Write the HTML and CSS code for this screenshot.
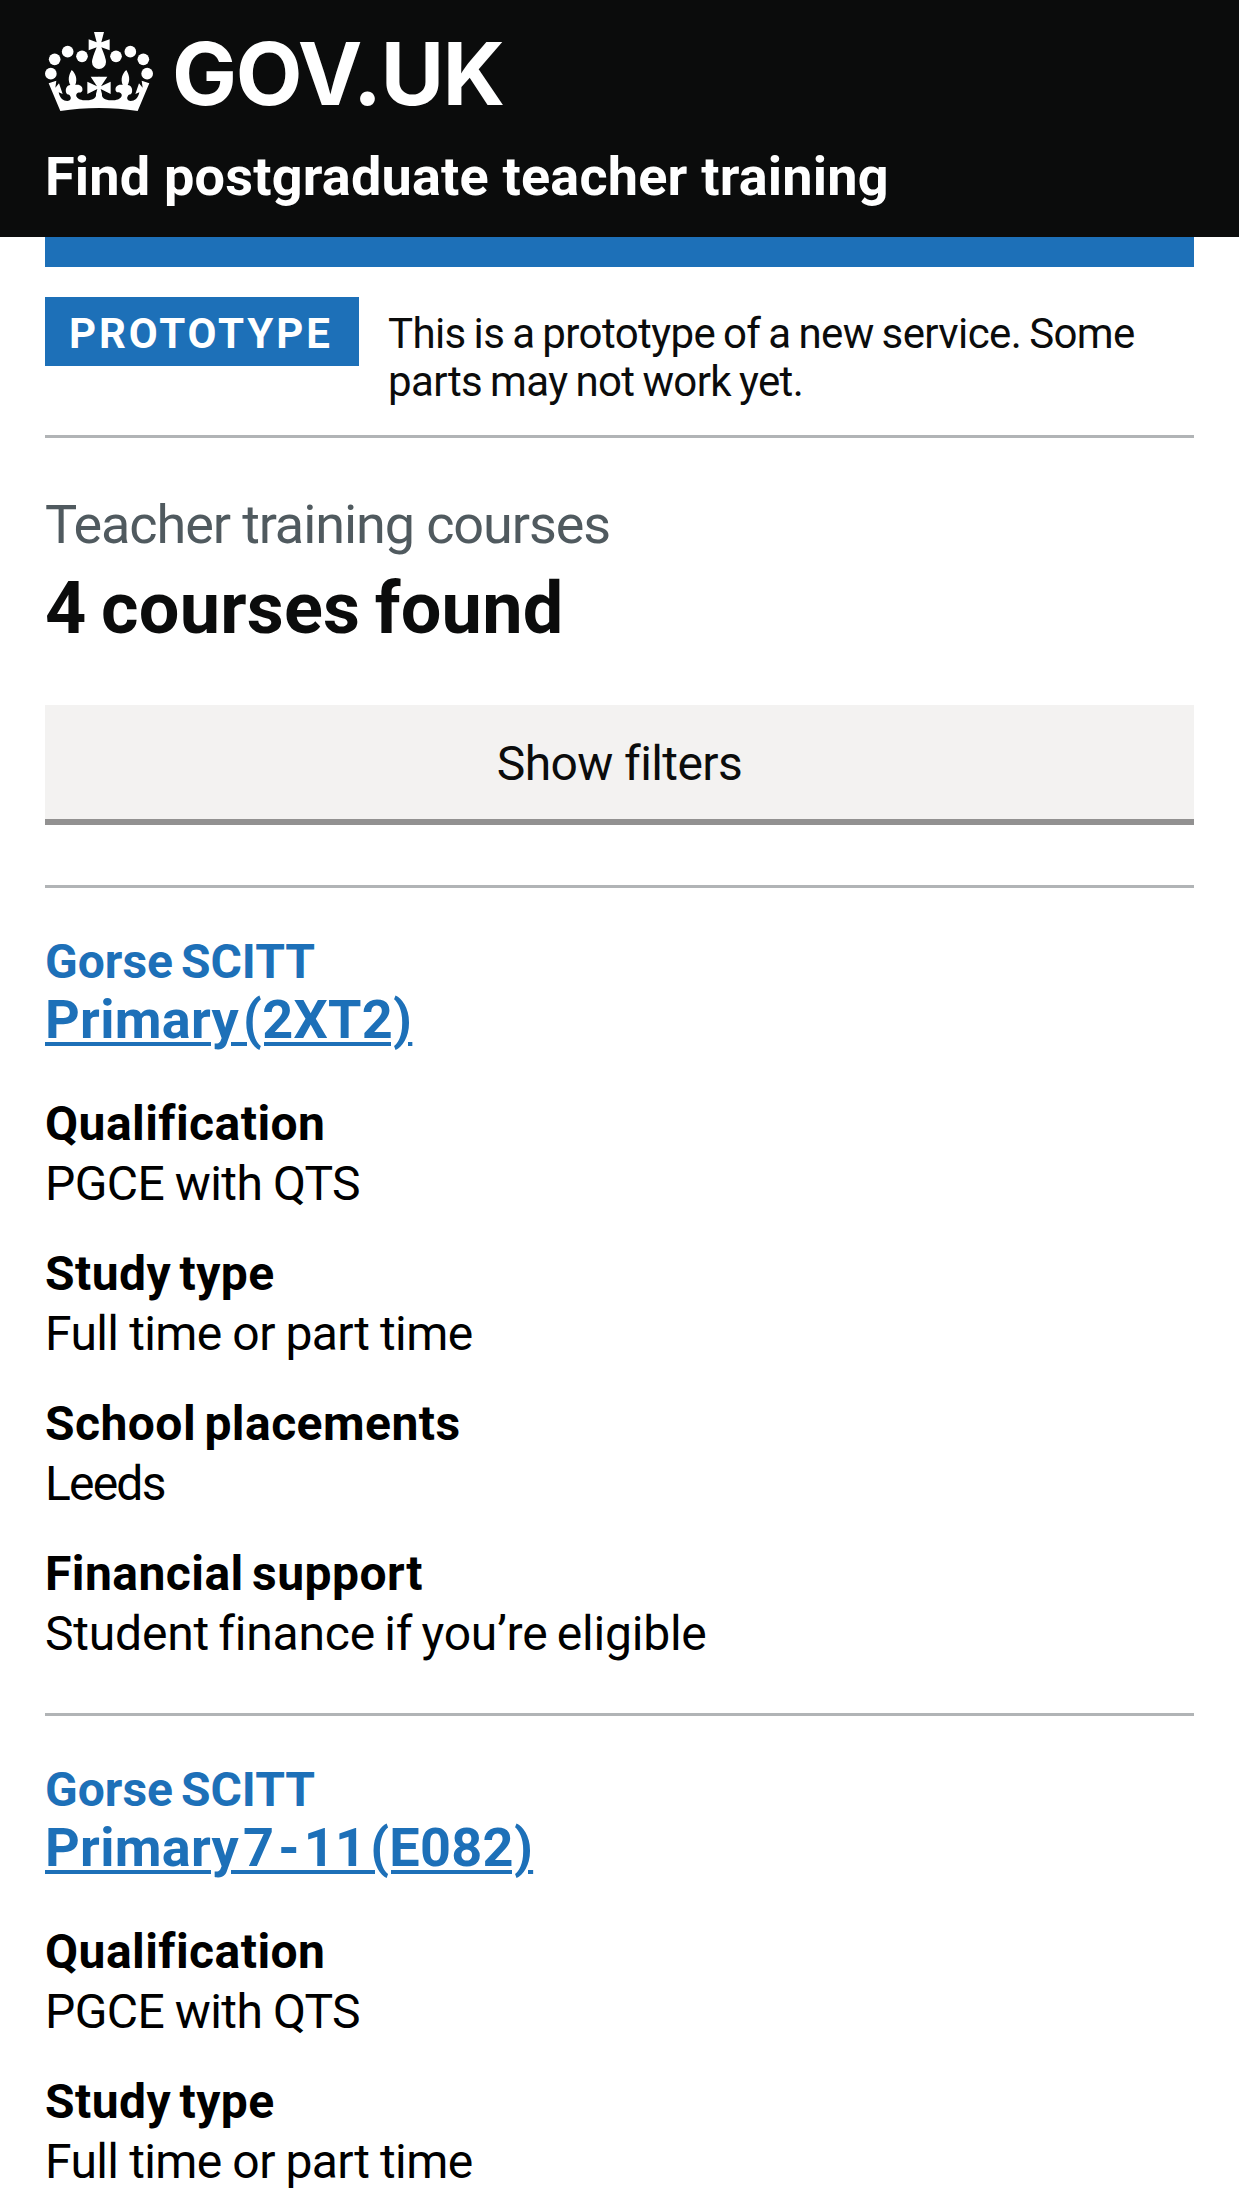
FILE: index.html
```
<!DOCTYPE html>
<html lang="en">
<head>
<meta charset="utf-8">
<title>Find postgraduate teacher training</title>
<link rel="stylesheet" href="styles.css">
</head>
<body>
<header class="header">
  <div class="logo">
    <svg class="crown" viewBox="45 36 324 237" aria-hidden="true">
      <defs>
        <g id="crown-half">
          <circle cx="62.500" cy="161" r="17.500"/>
          <circle cx="74" cy="118" r="17.500"/>
          <circle cx="113" cy="95" r="17.500"/>
          <circle cx="156" cy="109" r="17.500"/>
          <path d="M56 190L79 182L76 203L87 190L98 222L86 217C90 236 100 243 112 243C122 242 125 234 120 227C116 222 111 226 108 217C106 205 110 197 121 195C113 180 116 165 125 150C137 160 143 177 136 195C150 192 160 200 157 212C153 220 148 216 144 218C134 222 136 241 170 241C190 241 200 232 198 222L202 207L172 222V185L201 199L182 170H208V264C165 264 130 267 91 273Z"/>
        </g>
      </defs>
      <use href="#crown-half"/>
      <use href="#crown-half" transform="translate(414 0) scale(-1 1)"/>
      <path d="M192 36H222L214 67L239 58V91L214 82Q228 115 228 126A21 21 0 0 1 186 126Q186 115 200 82L176 91V58L200 67Z"/>
    </svg>
    <span class="logo-text">GOV.UK</span>
  </div>
  <div class="service-name">Find postgraduate teacher training</div>
</header>
<main class="container">
  <div class="phase-banner">
    <strong class="tag">PROTOTYPE</strong>
    <span class="phase-text">This is a prototype of a new service. Some<br>parts may not work yet.</span>
  </div>
  <div class="caption">Teacher training courses</div>
  <h1 class="title">4 courses found</h1>
  <button class="button" type="button">Show filters</button>
  <section class="course">
    <div class="provider">Gorse SCITT</div>
    <h2 class="course-name"><a class="link" href="#">Primary (2XT2)</a></h2>
    <dl class="details">
      <div><dt>Qualification</dt><dd>PGCE with QTS</dd></div>
      <div><dt>Study type</dt><dd>Full time or part time</dd></div>
      <div><dt>School placements</dt><dd class="tight">Leeds</dd></div>
      <div><dt>Financial support</dt><dd class="loose">Student finance if you’re eligible</dd></div>
    </dl>
  </section>
  <section class="course course-last">
    <div class="provider">Gorse SCITT</div>
    <h2 class="course-name"><a class="link" href="#">Primary 7 - 11 (E082)</a></h2>
    <dl class="details">
      <div><dt>Qualification</dt><dd>PGCE with QTS</dd></div>
      <div><dt>Study type</dt><dd>Full time or part time</dd></div>
    </dl>
  </section>
</main>
</body>
</html>
```
FILE: styles.css
```
* { box-sizing: border-box; }
body { margin: 0; background: #fff; color: #0b0c0c; font-family: Roboto, "Liberation Sans", sans-serif; }
h1, h2, dl, dd { margin: 0; }

.header { height: 237px; padding: 32px 45px 0; background: #0b0c0c; color: #fff; }
.logo { display: flex; gap: 19px; height: 79px; }
.crown { width: 108px; height: 79px; fill: #fff; }
.logo-text { font: 700 86.6px/83px Inter, "Liberation Sans", sans-serif; letter-spacing: -1.2px; }
.service-name { margin-top: 28px; font-size: 54px; line-height: 75px; font-weight: 700; letter-spacing: 0.2px; }

.container { margin: 0 45px; border-top: 30px solid #1d70b8; }
.phase-banner { display: flex; align-items: flex-start; gap: 29px; height: 171px; padding-top: 30px; border-bottom: 3px solid #b1b4b6; }
.tag { flex: none; width: 314px; height: 69px; padding: 4px 0 0 24px; background: #1d70b8; color: #fff; font-size: 42px; line-height: 65px; font-weight: 700; letter-spacing: 2.9px; }
.phase-text { padding-top: 13px; font-size: 42px; line-height: 48px; letter-spacing: -0.6px; word-spacing: -1.9px; white-space: nowrap; }

.caption { margin-top: 57px; color: #505a5f; font-size: 54px; line-height: 60px; letter-spacing: -1.1px; }
.title { margin-top: 16px; font-size: 72px; line-height: 75px; font-weight: 700; letter-spacing: 0.2px; word-spacing: -3.5px; }
.button { display: block; width: 100%; height: 114px; margin: 59px 0 66px; padding: 4px 0 0; border: 0; background: #f3f2f1; box-shadow: 0 6px 0 #929191; color: #0b0c0c; font: 400 48px/110px Roboto, sans-serif; letter-spacing: -0.6px; }

.course { padding: 45px 0 49px; border-top: 3px solid #b1b4b6; }
.course-last { padding-bottom: 16px; }
.provider { color: #1d70b8; font-size: 48px; line-height: 57px; font-weight: 700; letter-spacing: 0; word-spacing: -4px; }
.course-name { font-size: 54px; line-height: 60px; font-weight: 700; }
.link { color: #1d70b8; letter-spacing: 0.3px; word-spacing: -9.8px; text-decoration: underline; text-decoration-thickness: 3.5px; text-underline-offset: 4px; }
.details { display: flex; flex-direction: column; gap: 30px; margin-top: 44px; color: #000; font-size: 48px; line-height: 60px; }
.details dt { font-weight: 700; letter-spacing: 0.45px; word-spacing: -4px; }
.details dd { letter-spacing: -0.6px; word-spacing: -0.6px; }
.details .tight { letter-spacing: -1.8px; }
.details .loose { letter-spacing: -0.2px; word-spacing: -2.4px; }
```
